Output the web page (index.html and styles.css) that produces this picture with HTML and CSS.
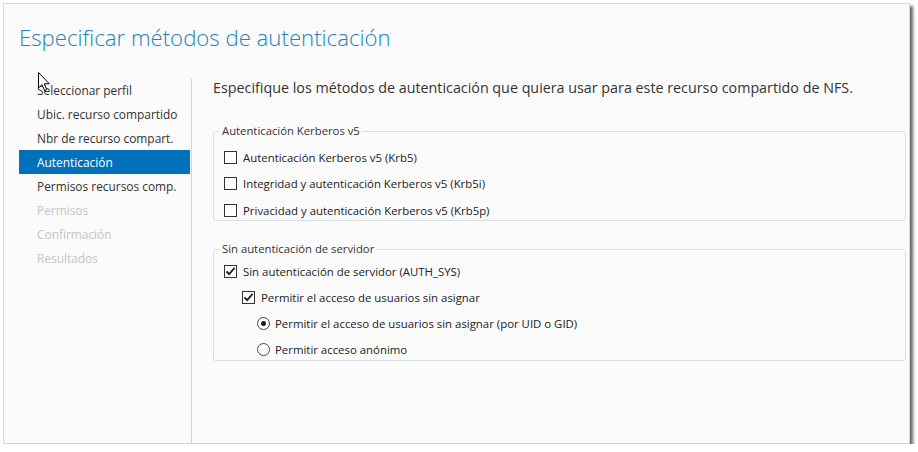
FILE: index.html
```html
<!DOCTYPE html>
<html lang="es">
<head>
<meta charset="utf-8">
<title>Especificar métodos de autenticación</title>
<link rel="stylesheet" href="styles.css">
</head>
<body>
<div class="window">
  <h1 class="title">Especificar métodos de autenticación</h1>
  <div class="content">
    <nav class="nav">
      <div class="nav-item">Seleccionar perfil</div>
      <div class="nav-item">Ubic. recurso compartido</div>
      <div class="nav-item">Nbr de recurso compart.</div>
      <div class="nav-item active">Autenticación</div>
      <div class="nav-item">Permisos recursos comp.</div>
      <div class="nav-item disabled">Permisos</div>
      <div class="nav-item disabled">Confirmación</div>
      <div class="nav-item disabled">Resultados</div>
    </nav>
    <main class="main">
      <p class="intro">Especifique los métodos de autenticación que quiera usar para este recurso compartido de NFS.</p>
      <fieldset class="group group-krb">
        <legend>Autenticación Kerberos v5</legend>
        <div class="row"><span class="check"></span><span>Autenticación Kerberos v5 (Krb5)</span></div>
        <div class="row"><span class="check"></span><span>Integridad y autenticación Kerberos v5 (Krb5i)</span></div>
        <div class="row"><span class="check"></span><span>Privacidad y autenticación Kerberos v5 (Krb5p)</span></div>
      </fieldset>
      <fieldset class="group group-sys">
        <legend>Sin autenticación de servidor</legend>
        <div class="row"><span class="check checked"><svg viewBox="0 0 13 13" width="13" height="13"><path d="M2.5 6.5 L5.2 9.2 L10.6 2.8" fill="none" stroke="#222" stroke-width="1.8"/></svg></span><span>Sin autenticación de servidor (AUTH_SYS)</span></div>
        <div class="row indent1"><span class="check checked"><svg viewBox="0 0 13 13" width="13" height="13"><path d="M2.5 6.5 L5.2 9.2 L10.6 2.8" fill="none" stroke="#222" stroke-width="1.8"/></svg></span><span>Permitir el acceso de usuarios sin asignar</span></div>
        <div class="row indent2"><span class="radio selected"></span><span>Permitir el acceso de usuarios sin asignar (por UID o GID)</span></div>
        <div class="row indent2"><span class="radio"></span><span>Permitir acceso anónimo</span></div>
      </fieldset>
    </main>
  </div>
  <svg class="cursor" viewBox="0 0 13 20" width="13" height="20"><path d="M0.5 0.5 L0.5 16 L4 12.6 L6.6 18.6 L8.8 17.6 L6.3 11.8 L11.3 11.8 Z" fill="#fff" stroke="#000" stroke-width="1" stroke-linejoin="miter"/></svg>
</div>
</body>
</html>
```
FILE: styles.css
```css
* { box-sizing: border-box; }
html, body { margin: 0; padding: 0; background: #ffffff; }
body { font-family: "Open Sans", "Noto Sans", sans-serif; color: #333; }

.window {
  position: relative;
  margin: 3px 0 0 3px;
  width: 907px;
  height: 441px;
  background: #fbfbfb;
  border: 1px solid #d6d6d6;
  box-shadow: 3px 3px 3px rgba(0,0,0,0.6);
  display: flex;
  flex-direction: column;
}

.title {
  margin: 0;
  padding: 19px 0 0 15px;
  height: 74px;
  font-weight: 300;
  font-size: 22.2px;
  line-height: 30px;
  color: #2383b8;
}

.content {
  flex: 1;
  display: flex;
}

.nav {
  width: 173px;
  margin-left: 15px;
  border-right: 1px solid #d4d4d4;
}
.nav-item {
  height: 24px;
  line-height: 24px;
  padding-left: 18px;
  font-size: 11.9px;
  color: #333;
  margin-right: 1px;
}
.nav-item.active { background: #0071ba; color: #fff; }
.nav-item.disabled { color: #c4c4c4; }

.main {
  flex: 1;
  padding: 0 3px 0 21px;
}
.intro {
  margin: 0;
  font-size: 14.3px;
  line-height: 20px;
  color: #333;
}

.group {
  margin: 25px 0 0 0;
  padding: 0 0 0 10px;
  border: 1px solid #d6dfe5;
  border-radius: 3px;
  min-width: 0;
}
.group legend {
  font-size: 11.3px;
  line-height: 16px;
  padding: 0 2px;
  margin-left: -4px;
  color: #333;
}
.group-krb { padding-top: 9px; padding-bottom: 1px; }
.group-sys { margin-top: 20px; padding-top: 5px; padding-bottom: 2px; }

.row {
  display: flex;
  align-items: center;
  gap: 6px;
  height: 18px;
  font-size: 11.4px;
  color: #222;
  white-space: nowrap;
}
.row + .row { margin-top: 8.5px; }
.group-sys .row + .row { margin-top: 8px; }
.indent1 { padding-left: 18px; }
.indent2 { padding-left: 33px; gap: 5px; }

.check {
  width: 13px;
  height: 13px;
  border: 1px solid #333;
  background: #fff;
  display: inline-flex;
  position: relative;
  flex: none;
}
.check svg { position: absolute; left: -1px; top: -1px; }

.radio {
  width: 13px;
  height: 13px;
  border: 1px solid #444;
  border-radius: 50%;
  background: #fff;
  display: inline-flex;
  align-items: center;
  justify-content: center;
  flex: none;
}
.radio.selected::after {
  content: "";
  width: 5px;
  height: 5px;
  border-radius: 50%;
  background: #1a1a1a;
}

.cursor { position: absolute; left: 34px; top: 68px; }
```
